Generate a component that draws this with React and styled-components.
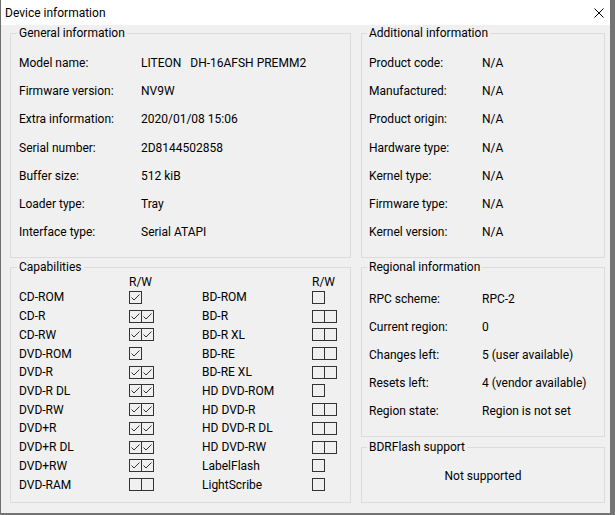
import React from 'react'
import styled, { createGlobalStyle } from 'styled-components'

const GlobalStyle = createGlobalStyle`
  html, body {
    margin: 0;
    padding: 0;
    background: #747474;
  }
  body {
    font-family: Roboto, "Liberation Sans", Arial, sans-serif;
    font-size: 12px;
    color: #000;
  }
`

const Window = styled.div`
  width: 610px;
  height: 513px;
  box-sizing: border-box;
  border-left: 1px solid #6e6e6e;
  background: #f0f0f0;
  display: flex;
  flex-direction: column;
`

const TitleBar = styled.div`
  height: 25px;
  flex: none;
  background: #fff;
  display: flex;
  align-items: center;
  justify-content: space-between;
  padding: 0 6px 0 4px;
`

const Title = styled.span`
  font-size: 12px;
  line-height: 16px;
`

const Content = styled.div`
  display: grid;
  grid-template-columns: 341px 244px;
  grid-template-rows: 232px 243px;
  column-gap: 10px;
  row-gap: 2px;
  padding: 1px 0 0 9px;
`

const Stack = styled.div`
  display: flex;
  flex-direction: column;
  gap: 3px;
`

const Group = styled.fieldset`
  margin: 0;
  min-width: 0;
  box-sizing: border-box;
  height: ${p => p.$height}px;
  border: 1px solid #dcdcdc;
  padding: ${p => p.$padTop || 0}px 0 0 ${p => p.$padLeft || 0}px;
`

const Legend = styled.legend`
  padding: 0 2px;
  margin-left: ${p => p.$inset}px;
  line-height: 15px;
  font-size: 12px;
`

const InfoGrid = styled.div`
  display: grid;
  grid-template-columns: ${p => p.$labelWidth}px 1fr;
  grid-auto-rows: ${p => p.$rowHeight}px;
  align-items: center;
  line-height: 16px;
`

const Value = styled.span`
  white-space: pre;
`

const CapsGrid = styled.div`
  display: grid;
  grid-template-columns: 110px 73px 110px 1fr;
  grid-template-rows: 12px;
  grid-auto-rows: 18.73px;
  align-items: center;
  line-height: 16px;
`

const Header = styled.span`
  line-height: 12px;
`

const BoxRow = styled.div`
  display: flex;
`

const Box = styled.span`
  display: flex;
  align-items: center;
  justify-content: center;
  width: 13px;
  height: 13px;
  box-sizing: border-box;
  border: 1px solid #333;
  & + & {
    margin-left: -1px;
  }
`

const Centered = styled.div`
  text-align: center;
  line-height: 14px;
`

const general = [
  ['Model name:', 'LITEON   DH-16AFSH PREMM2'],
  ['Firmware version:', 'NV9W'],
  ['Extra information:', '2020/01/08 15:06'],
  ['Serial number:', '2D8144502858'],
  ['Buffer size:', '512 kiB'],
  ['Loader type:', 'Tray'],
  ['Interface type:', 'Serial ATAPI'],
]

const additional = [
  ['Product code:', 'N/A'],
  ['Manufactured:', 'N/A'],
  ['Product origin:', 'N/A'],
  ['Hardware type:', 'N/A'],
  ['Kernel type:', 'N/A'],
  ['Firmware type:', 'N/A'],
  ['Kernel version:', 'N/A'],
]

const regional = [
  ['RPC scheme:', 'RPC-2'],
  ['Current region:', '0'],
  ['Changes left:', '5 (user available)'],
  ['Resets left:', '4 (vendor available)'],
  ['Region state:', 'Region is not set'],
]

const capsLeft = [
  ['CD-ROM', [1]],
  ['CD-R', [1, 1]],
  ['CD-RW', [1, 1]],
  ['DVD-ROM', [1]],
  ['DVD-R', [1, 1]],
  ['DVD-R DL', [1, 1]],
  ['DVD-RW', [1, 1]],
  ['DVD+R', [1, 1]],
  ['DVD+R DL', [1, 1]],
  ['DVD+RW', [1, 1]],
  ['DVD-RAM', [0, 0]],
]

const capsRight = [
  ['BD-ROM', [0]],
  ['BD-R', [0, 0]],
  ['BD-R XL', [0, 0]],
  ['BD-RE', [0, 0]],
  ['BD-RE XL', [0, 0]],
  ['HD DVD-ROM', [0]],
  ['HD DVD-R', [0, 0]],
  ['HD DVD-R DL', [0, 0]],
  ['HD DVD-RW', [0, 0]],
  ['LabelFlash', [0]],
  ['LightScribe', [0]],
]

const CloseIcon = () => (
  <svg width="10" height="10" viewBox="0 0 10 10">
    <path d="M0.5 0.5 L9.5 9.5 M9.5 0.5 L0.5 9.5" stroke="#000" strokeWidth="1" fill="none" />
  </svg>
)

const Check = () => (
  <svg width="11" height="11" viewBox="0 0 11 11">
    <polyline points="1.5,5.5 4,8 9.5,2.5" stroke="#333" strokeWidth="1" fill="none" />
  </svg>
)

const Boxes = ({ states }) => (
  <BoxRow>
    {states.map((on, i) => (
      <Box key={i}>{on ? <Check /> : null}</Box>
    ))}
  </BoxRow>
)

const InfoList = ({ rows, labelWidth, rowHeight }) => (
  <InfoGrid $labelWidth={labelWidth} $rowHeight={rowHeight}>
    {rows.map(([label, value]) => (
      <React.Fragment key={label}>
        <span>{label}</span>
        <Value>{value}</Value>
      </React.Fragment>
    ))}
  </InfoGrid>
)

export default function App() {
  return (
    <>
      <GlobalStyle />
      <Window>
        <TitleBar>
          <Title>Device information</Title>
          <CloseIcon />
        </TitleBar>
        <Content>
          <Group $height={232} $padTop={8} $padLeft={8}>
            <Legend $inset={-2}>General information</Legend>
            <InfoList rows={general} labelWidth={122} rowHeight={28.17} />
          </Group>
          <Group $height={232} $padTop={8} $padLeft={7}>
            <Legend $inset={-2}>Additional information</Legend>
            <InfoList rows={additional} labelWidth={113} rowHeight={28.17} />
          </Group>
          <Group $height={243} $padTop={1} $padLeft={8}>
            <Legend $inset={-2}>Capabilities</Legend>
            <CapsGrid>
              <span />
              <Header>R/W</Header>
              <span />
              <Header>R/W</Header>
              {capsLeft.map(([name, states], i) => (
                <React.Fragment key={name}>
                  <span>{name}</span>
                  <Boxes states={states} />
                  <span>{capsRight[i][0]}</span>
                  <Boxes states={capsRight[i][1]} />
                </React.Fragment>
              ))}
            </CapsGrid>
          </Group>
          <Stack>
            <Group $height={177} $padTop={10} $padLeft={7}>
              <Legend $inset={-2}>Regional information</Legend>
              <InfoList rows={regional} labelWidth={113} rowHeight={28} />
            </Group>
            <Group $height={63} $padTop={14}>
              <Legend $inset={5}>BDRFlash support</Legend>
              <Centered>Not supported</Centered>
            </Group>
          </Stack>
        </Content>
      </Window>
    </>
  )
}
